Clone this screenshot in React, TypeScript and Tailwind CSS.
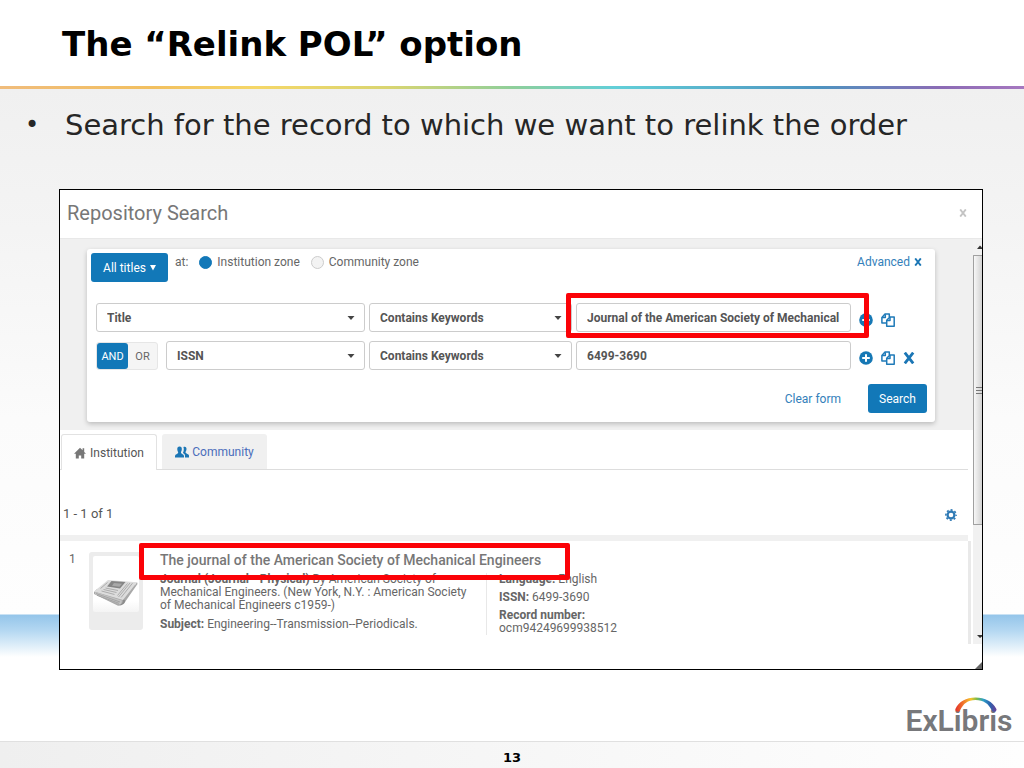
import { useState } from "react";
import type { ReactNode } from "react";

const FIELD =
  "h-[29px] w-full rounded-[3px] border border-[#cccccc] bg-white text-xs font-bold text-[#555555] outline-none";

function Caret() {
  return (
    <svg
      viewBox="0 0 8 4"
      className="pointer-events-none absolute right-2.5 top-[13px] h-1 w-2"
      aria-hidden="true"
    >
      <path d="M0.5 0h7L4 4z" fill="#444" />
    </svg>
  );
}

function SelectField({ label, value, options }: { label: string; value: string; options: string[] }) {
  return (
    <div className="relative min-w-0 flex-1">
      <select aria-label={label} defaultValue={value} className={`${FIELD} appearance-none pl-2.5 pr-6`}>
        {options.map((o) => (
          <option key={o}>{o}</option>
        ))}
      </select>
      <Caret />
    </div>
  );
}

function Highlight({ className }: { className: string }) {
  return (
    <span
      aria-hidden="true"
      className={`pointer-events-none absolute z-10 rounded-[2px] border-5 border-[#fb0207] ${className}`}
    />
  );
}

function PlusIcon() {
  return (
    <svg viewBox="0 0 14 14" className="size-3.5" aria-hidden="true">
      <circle cx="7" cy="7" r="6.8" fill="#1678b5" />
      <path d="M7 3.2v7.6M3.2 7h7.6" stroke="#fff" strokeWidth="2" />
    </svg>
  );
}

function CopyIcon() {
  return (
    <svg
      viewBox="0 0 14 14"
      className="size-3.5"
      fill="none"
      stroke="#1f7ab8"
      strokeWidth="1.5"
      strokeLinejoin="round"
      aria-hidden="true"
    >
      <path d="M5.200 10H.9V4.400L4 1h4.300v3" />
      <path d="M4.300 1.200v3.300H1" />
      <path d="M5.700 7.200L8.900 3.900h4.300v9.300H5.700z" />
      <path d="M9 4v3.400H6" />
    </svg>
  );
}

function CrossIcon({ className }: { className: string }) {
  return (
    <svg viewBox="0 0 12 12" className={className} fill="none" stroke="currentColor" aria-hidden="true">
      <path d="M1.8 .6l8.400 10.800M10.200 .6L1.8 11.400" strokeWidth="2.8" />
    </svg>
  );
}

function GearIcon() {
  return (
    <svg viewBox="0 0 12 12" className="size-3" fill="none" stroke="#2f7ab5" aria-hidden="true">
      <circle cx="6" cy="6" r="3.4" strokeWidth="2.2" />
      <circle cx="6" cy="6" r="5.1" strokeWidth="1.6" strokeDasharray="2 2.005" strokeDashoffset="1" />
    </svg>
  );
}

function HomeIcon() {
  return (
    <svg viewBox="0 0 12 12" className="size-3" fill="#777" aria-hidden="true">
      <path d="M6 .8L0 6.800h1.800v4.800h3V8.400h2.400v3.200h3V6.800H12l-1.800-1.800V1.200H8.600v2z" />
    </svg>
  );
}

function PeopleIcon() {
  return (
    <svg viewBox="0 0 14 12" className="h-3 w-3.5" fill="#1b76b5" aria-hidden="true">
      <path d="M4.600.6c1.700 0 2.400 1.200 2.200 3-.1 1.300-.5 2-.8 2.500v1c.2.900 2.900 1.200 3 2.800v1.500H0V9.900c.1-1.600 2.900-1.900 3.100-2.800v-1c-.4-.5-.7-1.200-.8-2.500C2.100 1.800 2.900.6 4.600.6z" />
      <path d="M8.400 1c2-1 3.300.3 3.100 2.300-.1 1.300-.5 1.900-.9 2.500v1c.2.900 3.300 1.200 3.400 2.800v1.800h-4V9.700c0-1.500-1-2.100-2.100-2.700.8-1.300 1.300-4 .5-6z" />
    </svg>
  );
}

function Newspaper() {
  return (
    <svg viewBox="0 0 44 27" className="h-[27px] w-11" aria-hidden="true">
      <path d="M0 13L3 10l38-4 2-3 .5 2L31 23l-4 3.500-3 .2L0 15z" fill="#a9a9a9" />
      <path d="M0 12.500L14 1l29 2.200L29 21z" fill="#dcdcdc" />
      <path d="M1 13l27 8.500-1 4.500L1 15.500z" fill="#c2c2c2" />
      <path d="M29 21c2-1 3 1 1.500 3s-4 2.500-5 1.800c2-.3 3.500-2 3.500-4.800z" fill="#8c8c8c" />
      <path d="M17.500 2l14 1-5.500 6.500-13-2z" fill="#858585" />
      <path d="M20 4l8 .7-2.500 3-7.500-1z" fill="#a8a8a8" />
      <path
        d="M13.500 3.500l-7 6M11.500 9l12.500 2.500M9.500 10.500l13 3M7.500 12l13 3.500M36 4l-11.500 14M38.500 4.200L27 18.500M33.500 4.500L23.500 16.500"
        stroke="#a0a0a0"
        strokeWidth=".8"
      />
      <path d="M2 14.500l24 8.500M3 16.300l22 8" stroke="#979797" strokeWidth=".7" />
    </svg>
  );
}

function Logo() {
  return (
    <div className="relative flex w-[104px] justify-center pt-0.5 font-['Roboto',sans-serif] text-[30px] leading-9 font-semibold text-[#77787b]">
      ExLibris
      <svg viewBox="0 0 42 16" className="absolute -top-1 left-12 h-4 w-[42px]" aria-hidden="true">
        <defs>
          <linearGradient id="arc" x1="0" x2="1" y1="0" y2="0">
            <stop offset="0" stopColor="#e2302a" />
            <stop offset=".18" stopColor="#f0702a" />
            <stop offset=".38" stopColor="#f5c52c" />
            <stop offset=".52" stopColor="#7dbb4a" />
            <stop offset=".68" stopColor="#2d9fc8" />
            <stop offset=".84" stopColor="#2b63ae" />
            <stop offset="1" stopColor="#6b3f97" />
          </linearGradient>
        </defs>
        <path
          d="M.4 12C4 4.500 11 .5 20.500.5S37.500 4.500 41.400 12c.8 2.600-3.200 3.900-4.600 1.500C33.500 6.500 28.500 3 20.500 3S8.500 6.500 5 13.500c-1.300 2.400-5.300 1.100-4.600-1.500z"
          fill="url(#arc)"
        />
      </svg>
    </div>
  );
}

function IconButton({ label, children }: { label: string; children: ReactNode }) {
  return (
    <button type="button" aria-label={label} className="text-[#1b76b5]">
      {children}
    </button>
  );
}

function SearchForm() {
  const [zone, setZone] = useState("Institution zone");
  return (
    <form
      onSubmit={(e) => e.preventDefault()}
      className="ml-[27px] mr-[38px] rounded-[3px] bg-white pb-[9px] pl-1 pr-1 pt-1 shadow-[0_2px_5px_rgba(0,0,0,0.22)]"
    >
      <div className="flex items-start text-xs text-[#666666]">
        <button type="button" className="flex h-[29px] w-[77px] items-center justify-center gap-1 rounded-[3px] bg-[#1278b8] text-white">
          All titles
          <svg viewBox="0 0 6 6" className="size-1.5" aria-hidden="true">
            <path d="M0 0h6L3 5.500z" fill="#fff" />
          </svg>
        </button>
        <span className="ml-[7px] leading-[18px]">at:</span>
        {["Institution zone", "Community zone"].map((z) => (
          <label key={z} className="ml-[11px] flex items-center gap-[5px] leading-[18px]">
            <input
              type="radio"
              name="zone"
              checked={zone === z}
              onChange={() => setZone(z)}
              className="size-[13px] appearance-none rounded-full border border-[#cccccc] bg-[#f3f3f3] checked:border-[#1278b8] checked:bg-[#1278b8]"
            />
            {z}
          </label>
        ))}
        <button type="button" className="ml-auto mr-[9px] flex items-center gap-1 leading-[18px] text-[#3380ba]">
          Advanced
          <CrossIcon className="size-2 text-[#1b76b5]" />
        </button>
      </div>

      <div className="mt-[21px] grid grid-cols-[269fr_203fr_275fr_76px] gap-x-1 gap-y-[9px] pl-[5px]">
        <SelectField label="First field" value="Title" options={["Title", "ISSN"]} />
        <SelectField label="First condition" value="Contains Keywords" options={["Contains Keywords", "Contains Phrase"]} />
        <div className="relative">
          <input aria-label="First search text" defaultValue="Journal of the American Society of Mechanical" className={`${FIELD} px-2.5`} />
          <Highlight className="-bottom-1.5 -left-2.5 -right-[18px] -top-2.5" />
        </div>
        <div className="flex items-center gap-2 pl-1 pt-1">
          <IconButton label="Add row"><PlusIcon /></IconButton>
          <IconButton label="Duplicate row"><CopyIcon /></IconButton>
        </div>

        <div className="flex items-center gap-2">
          <div className="flex h-7 w-[62px] items-stretch rounded-[3px] border border-[#e6e6e6] bg-[#f5f5f5] text-[11px]">
            <button type="button" aria-pressed="true" className="w-[31px] rounded-[3px] bg-[#1278b8] pt-1 text-white">AND</button>
            <button type="button" aria-pressed="false" className="flex-1 pt-1 text-[#666666]">OR</button>
          </div>
          <SelectField label="Second field" value="ISSN" options={["ISSN", "Title"]} />
        </div>
        <SelectField label="Second condition" value="Contains Keywords" options={["Contains Keywords", "Contains Phrase"]} />
        <input aria-label="Second search text" defaultValue="6499-3690" className={`${FIELD} px-2.5`} />
        <div className="flex items-center gap-2 pl-1 pt-1">
          <IconButton label="Add row"><PlusIcon /></IconButton>
          <IconButton label="Duplicate row"><CopyIcon /></IconButton>
          <IconButton label="Remove row"><CrossIcon className="size-3" /></IconButton>
        </div>
      </div>

      <div className="mr-1 mt-3.5 flex items-center justify-end gap-[27px] text-xs">
        <button type="reset" className="text-[#3380ba]">Clear form</button>
        <button type="submit" className="h-[29px] w-[59px] rounded-[3px] bg-[#1278b8] text-white">Search</button>
      </div>
    </form>
  );
}

function ResultRow() {
  return (
    <article className="flex h-[103px] items-start border-r-3 border-[#e9e9e9] pt-2 text-xs leading-[13px] text-[#666666]">
      <span className="w-[29px] pl-[9px] pt-1">1</span>
      <div className="mt-[3px] h-[78px] w-[54px] shrink-0 rounded-[3px] bg-[#ececec] p-1">
        <div className="flex h-14 items-center justify-center rounded-[2px] bg-linear-to-b from-white from-80% to-[#f4f4f4] pt-4"><Newspaper /></div>
      </div>
      <div className="ml-[17px]">
        <h3 className="relative w-fit text-sm leading-[22px] font-medium text-[#777777]">
          The journal of the American Society of Mechanical Engineers
          <Highlight className="-bottom-[9px] -left-[21px] -top-1.5 w-[431px]" />
        </h3>
        <div className="flex pt-0.5">
          <div className="w-[327px] border-r border-[#e8e8e8] pr-3">
            <p><b>Journal (Journal - Physical)</b> By American Society of Mechanical Engineers. (New York, N.Y. : American Society of Mechanical Engineers c1959-)</p>
            <p className="mt-1.5"><b>Subject:</b> Engineering--Transmission--Periodicals.</p>
          </div>
          <div className="w-36 pl-3">
            <p><b>Language:</b> English</p>
            <p className="mt-[5px]"><b>ISSN:</b> 6499-3690</p>
            <p className="mt-[5px]"><b>Record number:</b> ocm94249699938512</p>
          </div>
        </div>
      </div>
    </article>
  );
}

function Scrollbar() {
  return (
    <div className="flex w-[9px] shrink-0 flex-col overflow-hidden bg-[#f1f1f1]" aria-hidden="true">
      <svg viewBox="0 0 9 16" className="h-4 w-[9px]"><path d="M4 10l3-3.500 2 2V10z" fill="#333" /></svg>
      <div className="flex h-[270px] flex-col items-end justify-center gap-0.5 rounded-l-[1px] border border-r-0 border-[#a0a0a0] bg-linear-to-r from-[#f7f7f7] to-[#d2d2d2]">
        <i className="h-px w-1.5 bg-[#777777]" />
        <i className="h-px w-1.5 bg-[#777777]" />
        <i className="h-px w-1.5 bg-[#777777]" />
      </div>
      <svg viewBox="0 0 9 16" className="mt-auto h-4 w-[9px]"><path d="M4 7h5v1.500L7 10z" fill="#333" /></svg>
    </div>
  );
}

function RepositoryDialog() {
  return (
    <section
      aria-label="Repository Search"
      className="ml-[59px] mr-[41px] border border-black bg-white font-['Roboto',sans-serif]"
    >
      <header className="flex h-12 items-center justify-between pb-0.5 pl-[7px] pr-[15px]">
        <h2 className="text-xl text-[#777777]">Repository Search</h2>
        <button type="button" aria-label="Close" className="text-[#c4c4c4]"><CrossIcon className="size-2" /></button>
      </header>
      <div className="flex border-t border-[#e8e8e8]">
        <div className="min-w-0 flex-1">
          <div className="bg-[#f0f0f0] pb-2 pt-2.5">
            <SearchForm />
          </div>
          <div className="pr-[5px]">
            <div className="flex gap-[5px] border-b border-[#dddddd] pl-px pt-1 text-xs text-[#555555]">
              <button type="button" className="-mb-px flex h-9 w-24 items-center justify-center gap-1 rounded-t-[3px] border border-b-0 border-[#e2e2e2] bg-white">
                <HomeIcon />Institution
              </button>
              <button type="button" className="flex h-[35px] w-[105px] items-center justify-center gap-[3px] rounded-t-[3px] bg-[#f0f0f0] pt-px text-[#4a6dbb]">
                <PeopleIcon />Community
              </button>
            </div>
            <div className="flex h-[71px] items-end justify-between border-b-6 border-[#f0f0f0] pb-3 pl-[3px] pr-[11px] text-[13px] text-[#555555]">
              <span>1 - 1 of 1</span>
              <button type="button" aria-label="Settings" className="mb-0.5"><GearIcon /></button>
            </div>
          </div>
          <div className="pr-0.5"><ResultRow /></div>
        </div>
        <Scrollbar />
      </div>
      <div className="flex h-[25px] items-end justify-end">
        <svg viewBox="0 0 7 7" className="size-[7px]" aria-hidden="true"><path d="M7 0v7H0z" fill="#666" /></svg>
      </div>
    </section>
  );
}

export default function App() {
  return (
    <div className="flex min-h-screen flex-col bg-white font-['DejaVu_Sans',sans-serif]">
      <header className="flex h-[86px] items-center pl-[62px] pt-0.5">
        <h1 className="text-[34px] font-bold text-black">The “Relink POL” option</h1>
      </header>
      <div className="h-[3px] bg-[linear-gradient(to_right,#f0bc7c_0%,#f2c060_15%,#f5d768_25%,#d9d571_38%,#8fcf9a_50%,#62cfd8_60%,#4e93c0_80%,#8c6bb5_92%,#a678c0_100%)]" />
      <main className="flex flex-1 flex-col bg-[linear-gradient(to_bottom,#f0f0f0_0,#f4f4f4_140px,#fbfbfb_330px,#fefefe_525px,#94c5ea_526px,#b5d8f2_542px,#ffffff_568px)]">
        <ul className="h-[100px] pt-[18px] text-[29px] leading-9 text-[#262626]">
          <li className="flex items-center pl-[25px]">
            <span className="w-10 text-2xl" aria-hidden="true">•</span>
            Search for the record to which we want to relink the order
          </li>
        </ul>
        <RepositoryDialog />
        <div className="mt-auto flex justify-end pb-0.5 pr-[13px]"><Logo /></div>
      </main>
      <footer className="flex h-[27px] items-center justify-center border-t border-[#e0e0e0] bg-linear-to-r from-[#efefef] to-[#fefefe] pt-1.5 text-[13px] font-bold text-black">
        13
      </footer>
    </div>
  );
}
